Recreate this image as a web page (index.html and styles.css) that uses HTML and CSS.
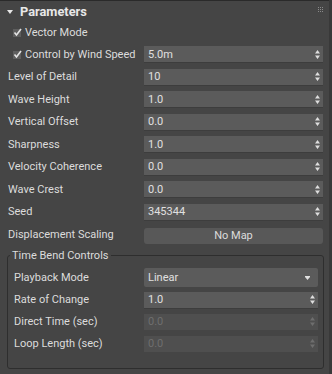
FILE: index.html
```html
<!DOCTYPE html>
<html>
<head>
<meta charset="utf-8">
<link rel="stylesheet" href="styles.css">
</head>
<body>
<div class="panel">
  <div class="head">
    <svg class="tri" width="6" height="4" viewBox="0 0 6 4"><path d="M0 0H6L3 4Z" fill="#e8e8e8"/></svg>
    <span class="title">Parameters</span>
    <svg class="grip" width="5" height="5" viewBox="0 0 5 5" fill="#8a8a8a">
      <rect x="0" y="0" width="1" height="1"/><rect x="2" y="0" width="1" height="1"/><rect x="4" y="0" width="1" height="1"/>
      <rect x="0" y="2" width="1" height="1"/><rect x="2" y="2" width="1" height="1"/><rect x="4" y="2" width="1" height="1"/>
      <rect x="0" y="4" width="1" height="1"/><rect x="2" y="4" width="1" height="1"/><rect x="4" y="4" width="1" height="1"/>
    </svg>
  </div>

  <div class="check-row">
    <svg class="cb" width="9" height="9" viewBox="0 0 9 9"><rect x="0" y="1" width="8" height="8" fill="#5e5e5e"/><path d="M1.5 4.5L3.5 7L8 1" stroke="#e4e4e4" stroke-width="1.6" fill="none"/></svg>
    <span>Vector Mode</span>
  </div>

  <div class="row">
    <div class="chk-label">
      <svg class="cb" width="9" height="9" viewBox="0 0 9 9"><rect x="0" y="1" width="8" height="8" fill="#5e5e5e"/><path d="M1.5 4.5L3.5 7L8 1" stroke="#e4e4e4" stroke-width="1.6" fill="none"/></svg>
      <span>Control by Wind Speed</span>
    </div>
    <div class="field"><span>5.0m</span><svg class="spin" width="5" height="9" viewBox="0 0 5 9"><path d="M2.5 0L5 3.5H0Z M0 5.5H5L2.5 9Z" fill="#dedede"/></svg></div>
  </div>

  <div class="row">
    <div class="label">Level of Detail</div>
    <div class="field"><span>10</span><svg class="spin" width="5" height="9" viewBox="0 0 5 9"><path d="M2.5 0L5 3.5H0Z M0 5.5H5L2.5 9Z" fill="#dedede"/></svg></div>
  </div>
  <div class="row">
    <div class="label">Wave Height</div>
    <div class="field"><span>1.0</span><svg class="spin" width="5" height="9" viewBox="0 0 5 9"><path d="M2.5 0L5 3.5H0Z M0 5.5H5L2.5 9Z" fill="#dedede"/></svg></div>
  </div>
  <div class="row">
    <div class="label">Vertical Offset</div>
    <div class="field"><span>0.0</span><svg class="spin" width="5" height="9" viewBox="0 0 5 9"><path d="M2.5 0L5 3.5H0Z M0 5.5H5L2.5 9Z" fill="#dedede"/></svg></div>
  </div>
  <div class="row">
    <div class="label">Sharpness</div>
    <div class="field"><span>1.0</span><svg class="spin" width="5" height="9" viewBox="0 0 5 9"><path d="M2.5 0L5 3.5H0Z M0 5.5H5L2.5 9Z" fill="#dedede"/></svg></div>
  </div>
  <div class="row">
    <div class="label">Velocity Coherence</div>
    <div class="field"><span>0.0</span><svg class="spin" width="5" height="9" viewBox="0 0 5 9"><path d="M2.5 0L5 3.5H0Z M0 5.5H5L2.5 9Z" fill="#dedede"/></svg></div>
  </div>
  <div class="row">
    <div class="label">Wave Crest</div>
    <div class="field"><span>0.0</span><svg class="spin" width="5" height="9" viewBox="0 0 5 9"><path d="M2.5 0L5 3.5H0Z M0 5.5H5L2.5 9Z" fill="#dedede"/></svg></div>
  </div>
  <div class="row">
    <div class="label">Seed</div>
    <div class="field"><span>345344</span><svg class="spin" width="5" height="9" viewBox="0 0 5 9"><path d="M2.5 0L5 3.5H0Z M0 5.5H5L2.5 9Z" fill="#dedede"/></svg></div>
  </div>
  <div class="row">
    <div class="label">Displacement Scaling</div>
    <div class="button">No Map</div>
  </div>

  <fieldset class="group">
    <legend>Time Bend Controls</legend>
    <div class="grow">
      <div class="label">Playback Mode</div>
      <div class="dropdown"><span>Linear</span><svg width="5" height="4" viewBox="0 0 5 4"><path d="M0 0H5V1L2.5 4L0 1Z" fill="#e0e0e0"/></svg></div>
    </div>
    <div class="grow">
      <div class="label">Rate of Change</div>
      <div class="field"><span>1.0</span><svg class="spin" width="5" height="9" viewBox="0 0 5 9"><path d="M2.5 0L5 3.5H0Z M0 5.5H5L2.5 9Z" fill="#dedede"/></svg></div>
    </div>
    <div class="grow">
      <div class="label">Direct Time (sec)</div>
      <div class="field disabled"><span>0.0</span><svg class="spin" width="5" height="9" viewBox="0 0 5 9"><path d="M2.5 0L5 3.5H0Z M0 5.5H5L2.5 9Z" fill="#6e6e6e"/></svg></div>
    </div>
    <div class="grow">
      <div class="label">Loop Length (sec)</div>
      <div class="field disabled"><span>0.0</span><svg class="spin" width="5" height="9" viewBox="0 0 5 9"><path d="M2.5 0L5 3.5H0Z M0 5.5H5L2.5 9Z" fill="#6e6e6e"/></svg></div>
    </div>
  </fieldset>
</div>
</body>
</html>
```

FILE: styles.css
```css
html, body {
  margin: 0;
  padding: 0;
  background: #393939;
}
body {
  font-family: Roboto, "Liberation Sans", sans-serif;
  font-size: 11px;
  color: #dcdcdc;
}
.panel {
  width: 329px;
  height: 374px;
  box-sizing: border-box;
  background: #454545;
  border-top: 1px solid #2a2a2a;
  overflow: hidden;
}
.head {
  position: relative;
  height: 21px;
  display: flex;
  align-items: center;
  padding-left: 7px;
}
.tri {
  display: block;
}
.title {
  margin-left: 7px;
  font-weight: bold;
  font-size: 12.8px;
  color: #e8e8e8;
}
.grip {
  position: absolute;
  right: 6px;
  top: 6px;
}
.check-row {
  height: 21px;
  display: flex;
  align-items: center;
  padding-left: 13px;
  gap: 3px;
}
.cb {
  display: block;
  flex: none;
}
.row {
  display: grid;
  grid-template-columns: 136px 179px;
  height: 22.5px;
  align-items: center;
  padding-left: 8px;
}
.chk-label {
  display: flex;
  align-items: center;
  gap: 3px;
  margin-left: 5px;
}
.field {
  height: 16px;
  box-sizing: border-box;
  background: #5b5b5b;
  box-shadow: 0 1px 0 #3d3d3d;
  display: flex;
  align-items: center;
  justify-content: space-between;
  padding: 0 3px 0 4px;
  color: #e0e0e0;
}
.field.disabled {
  background: #4f4f4f;
  color: #6e6e6e;
  box-shadow: none;
}
.spin {
  display: block;
}
.button {
  height: 16px;
  box-sizing: border-box;
  background: #585858;
  border-radius: 3px;
  display: flex;
  align-items: center;
  justify-content: center;
  color: #dcdcdc;
  margin-top: 3px;
}
.group {
  margin: 3px 5px 0 7px;
  padding: 5px 4px 13px 6px;
  border: 1px solid #2e2e2e;
  border-radius: 3px;
  min-width: 0;
}
.group legend {
  padding: 0 2px;
  margin-left: -4px;
  color: #dcdcdc;
}
.grow {
  display: grid;
  grid-template-columns: 130px 174px;
  height: 22px;
  align-items: center;
}
.dropdown {
  height: 19px;
  box-sizing: border-box;
  background: #5b5b5b;
  border-radius: 2px;
  display: flex;
  align-items: center;
  justify-content: space-between;
  padding: 0 8px 0 4px;
  color: #e0e0e0;
}
```
